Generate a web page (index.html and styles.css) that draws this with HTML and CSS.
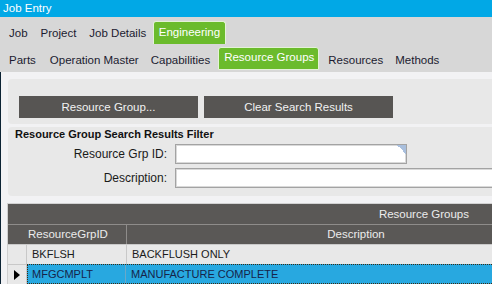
FILE: index.html
```html
<!DOCTYPE html>
<html lang="en">
<head>
  <meta charset="UTF-8" />
  <title>Job Entry</title>
  <link rel="stylesheet" href="styles.css">
</head>
<body>

  <!-- Window title -->
  <div class="titlebar">Job Entry</div>

  <!-- Tab strips -->
  <div class="tabbar">
    <div class="tabrow main-tabs">
      <span class="tab">Job</span>
      <span class="tab">Project</span>
      <span class="tab">Job Details</span>
      <span class="tab active">Engineering</span>
    </div>
    <div class="tabrow sub-tabs">
      <span class="tab parts">Parts</span>
      <span class="tab">Operation Master</span>
      <span class="tab">Capabilities</span>
      <span class="tab active">Resource Groups</span>
      <span class="tab">Resources</span>
      <span class="tab">Methods</span>
    </div>
  </div>

  <div class="content">
    <div class="panel actions">
      <button class="btn btn-group">Resource Group...</button>
      <button class="btn btn-clear">Clear Search Results</button>
    </div>

    <div class="panel filter">
      <div class="filter-title">Resource Group Search Results Filter</div>
      <div class="field">
        <label>Resource Grp ID:</label>
        <div class="input-wrap hint"><input type="text" class="input short" /></div>
      </div>
      <div class="field">
        <label>Description:</label>
        <div class="input-wrap"><input type="text" class="input long" /></div>
      </div>
    </div>

    <!-- Results grid -->
    <div class="grid">
      <div class="grid-caption">Resource Groups</div>
      <div class="grid-head">
        <div class="hcell first">ResourceGrpID</div>
        <div class="hcell desc">Description</div>
      </div>
      <div class="grid-row">
        <div class="rowhead"></div>
        <div class="cell id">BKFLSH</div>
        <div class="cell desc">BACKFLUSH ONLY</div>
      </div>
      <div class="grid-row selected">
        <div class="rowhead"><span class="arrow"></span></div>
        <div class="sel">
          <div class="cell id">MFGCMPLT</div>
          <div class="cell desc">MANUFACTURE COMPLETE</div>
        </div>
      </div>
    </div>
  </div>

</body>
</html>
```

FILE: styles.css
```css
body {
  margin: 0;
  width: 492px;
  height: 284px;
  overflow: hidden;
  font-family: 'Liberation Sans', Arial, sans-serif;
  font-size: 11.5px;
  color: #1b1b30;
  background: #f2f2f4;
}

.titlebar {
  height: 17px;
  line-height: 17px;
  padding-left: 3px;
  background: #01a8e6;
  color: white;
}

/* tabs */
.tabbar {
  background: #d7d7d7;
}
.tabrow {
  display: flex;
  align-items: flex-end;
  padding-left: 3px;
}
.main-tabs {
  height: 27px;
  padding-left: 2.5px;
}
.sub-tabs {
  height: 28px;
}
.tab {
  padding: 0 6px;
  white-space: nowrap;
}
.main-tabs .tab {
  height: 22px;
  line-height: 22px;
  padding: 0 6.5px;
}
.sub-tabs .tab {
  height: 24px;
  line-height: 24px;
}
.sub-tabs .tab.parts {
  margin-right: 2px;
}
.tab.active {
  box-sizing: border-box;
  height: 23px;
  line-height: 20px;
  padding: 0 5px;
  margin: 0 2px;
  background: #6bbb2c;
  color: white;
  border: 1px solid #e4f2d8;
  border-bottom: none;
  border-radius: 3px 3px 0 0;
}
.main-tabs .tab.active {
  margin: 0;
  padding: 0 5px;
}
.sub-tabs .tab.active {
  height: 23px;
  line-height: 19px;
  margin: 0 3px 2px 2px;
  border-bottom: 1px solid #e4f2d8;
  padding-right: 4px;
}

/* content */
.content {
  width: 600px;
  min-height: 212px;
  border-left: 1px solid #0b2233;
  padding: 7px 0 0 7px;
  box-sizing: border-box;
}
.panel {
  background: #e8e8e8;
  border-radius: 4px;
}
.actions {
  height: 45px;
  box-sizing: border-box;
  padding: 17px 0 0 11px;
  display: flex;
  gap: 6px;
}
.btn {
  height: 22px;
  border: none;
  background: #575553;
  color: #f2f2f2;
  font-family: inherit;
  font-size: 11.5px;
  padding: 0;
}
.btn-group {
  width: 179px;
}
.btn-clear {
  width: 189px;
}

.filter {
  margin-top: 3px;
  padding: 0 0 8px 0;
}
.filter-title {
  font-weight: bold;
  font-size: 11px;
  line-height: 14px;
  padding-left: 7px;
  color: #111;
  margin-bottom: 3px;
}
.field {
  display: grid;
  grid-template-columns: 159px auto;
  column-gap: 8px;
  align-items: center;
  margin-bottom: 4px;
}
.field:last-child {
  margin-bottom: 0;
}
.field label {
  text-align: right;
  font-size: 12px;
  color: #1a1a1a;
}
.input-wrap {
  position: relative;
}
.input {
  box-sizing: border-box;
  height: 20px;
  margin: 0;
  display: block;
  background: white;
  border: 1px solid #a3a3a3;
  box-shadow: inset 0 0 0 1px #d9d9d9;
}
.input.short {
  width: 232px;
}
.input.long {
  width: 420px;
}
.hint::after {
  content: '';
  position: absolute;
  top: 1px;
  left: 222px;
  width: 9px;
  height: 9px;
  background: linear-gradient(to bottom left, #a9bfdd 50%, transparent 50%);
}

/* grid */
.grid {
  margin: 7px 0 0 -1px;
  width: 580px;
  border-top: 1px solid #d2d2d2;
  border-left: 1px solid #cfcfcf;
}
.grid-caption {
  height: 20px;
  line-height: 20px;
  background: #5a5856;
  color: #ececec;
  text-align: right;
  padding-right: 119px;
  border-bottom: 1px solid #8e8c8a;
}
.grid-head {
  display: flex;
  height: 19px;
  line-height: 19px;
  background: #5a5856;
  color: #ececec;
  border-bottom: 1px solid #c9c9c9;
}
.hcell.first {
  width: 98px;
  padding-left: 20px;
  border-right: 1px solid #8e8c8a;
}
.hcell.desc {
  width: 458px;
  text-align: center;
}
.grid-row {
  display: flex;
  height: 19px;
  line-height: 19px;
  background: #e8e8e8;
  border-bottom: 1px solid #c8c8c8;
  font-size: 11px;
  color: #1a1a1a;
}
.rowhead {
  width: 18px;
  border-right: 1px solid #c8c8c8;
  position: relative;
}
.cell {
  padding-left: 5px;
}
.cell.id {
  width: 94px;
  border-right: 1px solid #c8c8c8;
}
.selected .sel {
  display: flex;
  flex: 1;
  background: #28a8e0;
  border: 1px dotted #3b2a12;
  margin-top: -1px;
  color: #16244a;
}
.selected .sel .cell.id {
  width: 93px;
  padding-left: 4px;
  border-right: 1px solid #6aa8c8;
}
.arrow {
  position: absolute;
  left: 6px;
  top: 5px;
  width: 0;
  height: 0;
  border-top: 5px solid transparent;
  border-bottom: 5px solid transparent;
  border-left: 6px solid #000;
}
```
